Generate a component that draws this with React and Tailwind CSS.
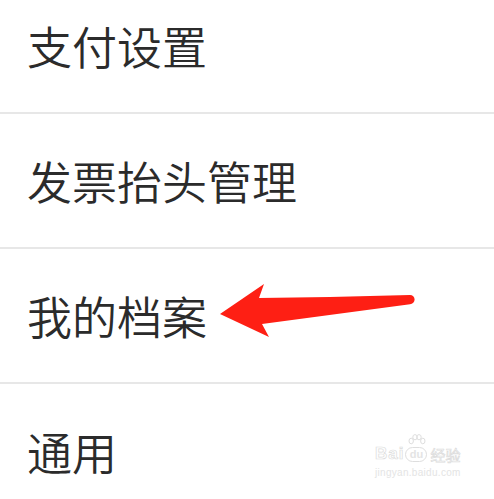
import React from 'react';

const items = ['支付设置', '发票抬头管理', '我的档案', '通用'];

// 红色指示箭头
const Arrow = () => (
  <svg className="absolute left-0 top-0 pointer-events-none" width="494" height="499" viewBox="0 0 494 499">
    <path
      d="M220 314 L264 284 L259 298 L330 297 L410 295 A4.6 4.6 0 0 1 410 304.2 L262 324 L269 337 Z"
      fill="#fe1f14"
    />
  </svg>
);

// 百度经验水印
const Watermark = () => (
  <div className="absolute left-[375px] top-[445px] flex flex-col items-start text-[#e4e4e4] select-none">
    <div className="flex items-end leading-none">
      <span className="text-[17px] font-bold tracking-[1px] text-white [font-family:'Liberation_Sans',sans-serif] [-webkit-text-stroke:0.7px_#dcdcdc]">Bai</span>
      <span className="relative ml-[1px] flex h-[15px] w-[22px] items-center justify-center rounded-full border border-[#dedede] text-[11px] font-bold [font-family:'Liberation_Sans',sans-serif]">
        du
        <svg className="absolute -top-[14px] left-[2px]" width="18" height="14" viewBox="0 0 18 14">
          <g fill="none" stroke="#dedede" strokeWidth="1">
            <ellipse cx="3.2" cy="7" rx="2.2" ry="2.8" />
            <ellipse cx="7" cy="3.2" rx="2.2" ry="2.6" />
            <ellipse cx="11" cy="3.2" rx="2.2" ry="2.6" />
            <ellipse cx="14.8" cy="7" rx="2.2" ry="2.8" />
          </g>
        </svg>
      </span>
      <span className="ml-[3px] text-[15px] text-white [font-family:'Noto_Sans_CJK_SC',sans-serif] [-webkit-text-stroke:0.7px_#dcdcdc]">经验</span>
    </div>
    <div className="mt-[6px] text-[10px] leading-none tracking-[0.3px] [font-family:'Liberation_Sans',sans-serif]">jingyan.baidu.com</div>
  </div>
);

export default function App() {
  return (
    <div className="relative h-[499px] w-[494px] overflow-hidden bg-white [font-family:'Noto_Sans_CJK_SC',sans-serif]">
      <div className="flex flex-col">
        {items.map((label, i) => (
          <div
            key={label}
            className={
              i === 0
                ? 'flex h-[114px] items-center border-b-2 border-[#e7e7e7] pb-[22px] pl-[27px]'
                : i === items.length - 1
                ? 'flex h-[135px] items-center pl-[27px]'
                : 'flex h-[135px] items-center border-b-2 border-[#e7e7e7] pl-[27px]'
            }
          >
            <span className="text-[45px] font-[350] leading-none text-[#2b2b2b]">{label}</span>
          </div>
        ))}
      </div>
      <Arrow />
      <Watermark />
    </div>
  );
}
